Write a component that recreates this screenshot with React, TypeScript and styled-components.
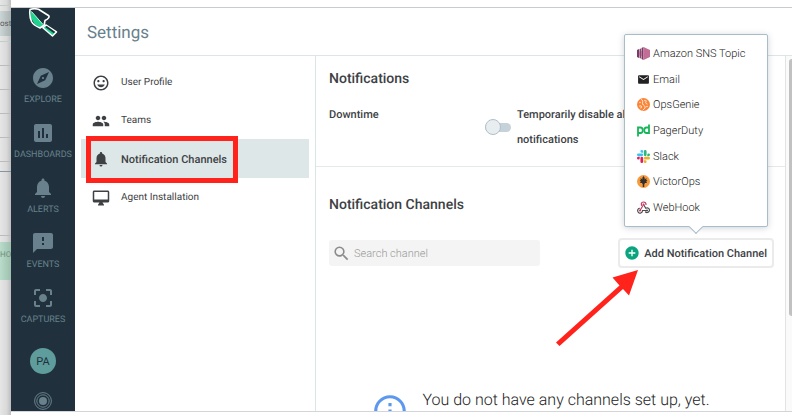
import React from "react";
import styled, { createGlobalStyle, css } from "styled-components";
import {
  MdAddCircle,
  MdCenterFocusStrong,
  MdEmail,
  MdExplore,
  MdFeedback,
  MdInfoOutline,
  MdInsertChart,
  MdInsertEmoticon,
  MdNotifications,
  MdOutlineDesktopMac,
  MdPeople,
  MdSearch,
} from "react-icons/md";

const GlobalStyle = createGlobalStyle`
  *, *::before, *::after { box-sizing: border-box; }
  body {
    margin: 0;
    background: #fff;
    font-family: Roboto, "Liberation Sans", sans-serif;
    color: #3d4144;
    text-rendering: geometricPrecision;
  }
  button, input { font: inherit; color: inherit; text-rendering: inherit; }
`;

const red = "#ff231c";

const Desktop = styled.div`
  display: grid;
  grid-template-columns: 11px minmax(0, 1fr);
  grid-template-rows: minmax(0, 1fr);
  height: 100vh;
  overflow: hidden;
`;

/* Sliver of the window that lies behind */
const BackWindow = styled.div`
  display: flex;
  flex-direction: column;
  overflow: hidden;
  background: linear-gradient(90deg, #e6e6e6, #d9d9d9 60%, #bdbdbd);
`;

const BackRow = styled.div<{ $h: number; $tone?: "tab" | "green"; $line?: string }>`
  flex: none;
  height: ${(p) => p.$h}px;
  display: flex;
  align-items: center;
  font-size: 8px;
  color: ${(p) => (p.$tone === "green" ? "#6f8f7d" : "#55595b")};
  border-bottom: 1px solid ${(p) => p.$line ?? "transparent"};
  ${(p) => p.$tone === "tab" && css`background: linear-gradient(90deg, #ccd6d6, #a9b1b1);`}
  ${(p) => p.$tone === "green" && css`background: linear-gradient(90deg, #b9dccb, #9dbfae);`}
`;

const Window = styled.div`
  display: grid;
  grid-template-rows: 8px minmax(0, 1fr) 4px;
  min-width: 0;
`;

const TitleStrip = styled.div`
  background: #fff;
  border-bottom: 1px solid #c9cccf;
`;

const BottomStrip = styled.div`
  background: #fff;
  border-top: 1px solid #d3d5db;
`;

const Viewport = styled.div`
  display: grid;
  grid-template-columns: 64px minmax(0, 1fr);
  grid-template-rows: minmax(0, 1fr);
  min-height: 0;
  overflow: hidden;
  background: #fff;
`;

const Sidebar = styled.nav`
  display: flex;
  flex-direction: column;
  align-items: center;
  min-height: 0;
  overflow: hidden;
  background: #20313d;
  color: #68818c;
`;

const Logo = styled.a`
  flex: none;
  height: 58px;
  svg { display: block; }
`;

const SideLink = styled.a`
  flex: none;
  display: flex;
  flex-direction: column;
  align-items: center;
  gap: 4px;
  height: 55px;
  color: inherit;
  text-decoration: none;
  font-size: 9px;
  line-height: 13px;
`;

const Avatar = styled.button`
  flex: none;
  width: 26px;
  height: 26px;
  margin: 7px 0 18px;
  padding: 0;
  border: 0;
  border-radius: 50%;
  background: #5f9c9c;
  color: #20313d;
  font-size: 11px;
`;

const Content = styled.div`
  display: grid;
  grid-template-rows: 48px minmax(0, 1fr);
  min-width: 0;
  min-height: 0;
`;

const Header = styled.header`
  display: flex;
  align-items: center;
  padding: 2px 0 0 12px;
  border-bottom: 1px solid #dbe6e8;
`;

const PageTitle = styled.h1`
  margin: 0;
  font-size: 17px;
  font-weight: 400;
  color: #68818c;
`;

const Columns = styled.div`
  display: grid;
  grid-template-columns: 240px minmax(0, 1fr) 7px;
  min-height: 0;
`;

const SettingsNav = styled.nav`
  display: flex;
  flex-direction: column;
  padding: 7px 6px;
`;

const SettingsLink = styled.a<{ $active?: boolean }>`
  position: relative;
  display: flex;
  align-items: center;
  gap: 11px;
  min-height: ${(p) => (p.$active ? 39 : 38)}px;
  padding: 1px 0 0 11px;
  background: ${(p) => (p.$active ? "#dee7e8" : "transparent")};
  color: #3d4144;
  font-size: ${(p) => (p.$active ? 11 : 10)}px;
  font-weight: ${(p) => (p.$active ? 500 : 400)};
  text-decoration: none;
`;

const Highlight = styled.span`
  position: absolute;
  left: 5px;
  top: -3px;
  width: 152px;
  height: 47px;
  border: 5px solid ${red};
  pointer-events: none;
`;

const Main = styled.main`
  min-width: 0;
  min-height: 0;
  border-left: 1px solid #d8e6e6;
`;

const Section = styled.section<{ $ruled?: boolean }>`
  padding: 13px 11px 14px 13px;
  ${(p) => p.$ruled && css`border-bottom: 1px solid #e6e9ea;`}
  & + & { padding-top: 28px; }
`;

const SectionTitle = styled.h2`
  margin: 0;
  font-size: 14px;
  line-height: 20px;
  font-weight: 500;
`;

const DowntimeRow = styled.div`
  display: grid;
  grid-template-columns: 156px 26px minmax(0, 132px);
  align-items: center;
  margin-top: 13px;
  font-size: 11px;
  line-height: 25px;
  font-weight: 500;
`;

const FieldName = styled.span`
  align-self: start;
`;

const Toggle = styled.input`
  appearance: none;
  display: flex;
  align-items: center;
  width: 26px;
  height: 9px;
  margin: 0;
  border-radius: 5px;
  background: #c6d2da;
  &::before {
    content: "";
    width: 16px;
    height: 16px;
    flex: none;
    border: 1px solid #afc0ca;
    border-radius: 50%;
    background: #e8edf0;
  }
  &:checked { justify-content: flex-end; }
`;

const ToggleLabel = styled.label`
  padding-left: 6px;
`;

const Tools = styled.div`
  display: flex;
  align-items: center;
  justify-content: space-between;
  margin-top: 23px;
`;

const SearchBox = styled.label`
  display: flex;
  align-items: center;
  gap: 3px;
  width: 211px;
  height: 26px;
  padding-left: 3px;
  border-radius: 3px;
  background: #f4f4f4;
  color: #8b8b8b;
`;

const SearchInput = styled.input`
  flex: 1;
  min-width: 0;
  padding: 0;
  border: 0;
  outline: 0;
  background: none;
  font-size: 11px;
  font-weight: 300;
  &::placeholder { color: #999; opacity: 1; }
`;

const AddAnchor = styled.div`
  position: relative;
`;

const AddButton = styled.button`
  display: flex;
  align-items: center;
  gap: 4px;
  height: 30px;
  padding: 0 5px 0 4px;
  border: 2px solid #ebebeb;
  border-radius: 4px;
  background: #fff;
  font-size: 11px;
  font-weight: 500;
  white-space: nowrap;
  svg { color: #0aa57f; }
`;

const Popover = styled.div`
  position: absolute;
  right: 6px;
  bottom: calc(100% + 11px);
  width: 144px;
  height: 193px;
  display: grid;
  grid-template-rows: repeat(7, 1fr);
  padding: 6px 0;
  border: 1px solid #a9bcc7;
  border-radius: 2px;
  background: #fff;
  box-shadow: 0 1px 6px rgba(60, 80, 95, 0.25);
  &::after {
    content: "";
    position: absolute;
    left: 66px;
    bottom: -6px;
    width: 10px;
    height: 10px;
    border: solid #a9bcc7;
    border-width: 0 1px 1px 0;
    background: #fff;
    transform: rotate(45deg);
  }
`;

const ChannelOption = styled.button`
  display: flex;
  align-items: center;
  gap: 3px;
  padding: 0 0 0 12px;
  border: 0;
  background: none;
  font-size: 11px;
  font-weight: 300;
  color: #222;
  text-align: left;
  svg { flex: none; }
`;

const Arrow = styled.svg`
  position: absolute;
  right: 132px;
  top: 30px;
  pointer-events: none;
`;

const Empty = styled.div`
  display: flex;
  align-items: flex-start;
  justify-content: center;
  gap: 13px;
  margin-top: 120px;
  padding-right: 22px;
  svg { flex: none; margin-top: 4px; color: #5b98ee; }
`;

const EmptyText = styled.p`
  margin: 0;
  font-size: 16px;
  font-weight: 300;
  color: #222;
  line-height: 24px;
`;

const ScrollTrack = styled.div`
  border-left: 1px solid #e3e3e3;
  background: #fafafa;
  padding: 3px 0 0 3px;
`;

const ScrollThumb = styled.div`
  height: 73%;
  border-radius: 4px 0 0 4px;
  background: #c1c1c1;
`;

const TrowelLogo = () => (
  <svg width="32" height="32" viewBox="0 0 32 32">
    <path d="M3.500 2.500 4 10 7.500 16 13 19.500 16.500 16.500Z" fill="#1ed290" />
    <path d="M4.500 3.500 15.500 16" stroke="#b9f2dc" strokeWidth="1" />
    <path
      d="M3 1.500C5 .8 9 .6 11.500 1.300L21.800 7.800C22.500 9 21.800 10.500 18 12.500L17.200 17 13 20C9.500 18.500 6 16.500 4.500 13.500 2.800 9.500 2.500 5 3 1.500Z"
      fill="none"
      stroke="#fff"
      strokeWidth="1.600"
      strokeLinejoin="round"
    />
    <path d="M15.800 19.800 18.800 17 29.500 24 25.500 28Z" fill="#1ed290" stroke="#fff" strokeWidth="1.500" strokeLinejoin="round" />
    <path d="M19 18.500 27.500 24.500" stroke="#20313d" strokeWidth="2" />
  </svg>
);

const Rings = () => (
  <svg width="18" height="18" viewBox="0 0 18 18" fill="none" stroke="currentColor">
    <circle cx="9" cy="9" r="8.400" />
    <circle cx="9" cy="9" r="6.200" />
    <circle cx="9" cy="9" r="4" fill="currentColor" stroke="none" />
  </svg>
);

const SnsIcon = () => (
  <svg width="13" height="13" viewBox="0 0 26 26">
    <path d="M0 6 4 4V22L0 20Z" fill="#7b3a63" />
    <path d="M5 4 8 3V23L5 22Z" fill="#8d4672" />
    <path d="M9 2 13 0V26L9 24Z" fill="#7b3a63" />
    <path d="M13 0 26 6V20L13 26Z" fill="#c26d96" />
    <path d="M4 9H5V17H4ZM8 8H9V18H8Z" fill="#a4588a" />
  </svg>
);

const OpsGenieIcon = () => (
  <svg width="13" height="13" viewBox="0 0 26 26">
    <circle cx="13" cy="13" r="13" fill="#fb8437" />
    <path d="M9 3C15 7 8 10 13 14S17 20 12 24M19 6C16 8 17 11 20 12M5 16C9 14 10 17 8 20" fill="none" stroke="#fff" strokeWidth="1.800" strokeLinecap="round" />
    <g fill="#fff">
      <circle cx="6" cy="9" r="1.300" />
      <circle cx="16" cy="5" r="1.300" />
      <circle cx="20" cy="17" r="1.400" />
    </g>
  </svg>
);

const PagerDutyIcon = () => (
  <svg width="13" height="13" viewBox="0 0 26 26" fill="none" stroke="#19b55b" strokeWidth="3.600">
    <path d="M2 25V7H7C13 7 13 18 7 18H2" />
    <path d="M24 1V18H19C13 18 13 7 19 7H24" />
  </svg>
);

const SlackIcon = () => (
  <svg width="13" height="13" viewBox="0 0 24 24">
    <path fill="#e01e5a" d="M5.042 15.165a2.528 2.528 0 0 1-2.520 2.523A2.528 2.528 0 0 1 0 15.165a2.527 2.527 0 0 1 2.522-2.520h2.520v2.520zM6.313 15.165a2.527 2.527 0 0 1 2.521-2.520 2.527 2.527 0 0 1 2.521 2.520v6.313A2.528 2.528 0 0 1 8.834 24a2.528 2.528 0 0 1-2.521-2.522v-6.313z" />
    <path fill="#36c5f0" d="M8.834 5.042a2.528 2.528 0 0 1-2.521-2.520A2.528 2.528 0 0 1 8.834 0a2.528 2.528 0 0 1 2.521 2.522v2.520H8.834zM8.834 6.313a2.528 2.528 0 0 1 2.521 2.521 2.528 2.528 0 0 1-2.521 2.521H2.522A2.528 2.528 0 0 1 0 8.834a2.528 2.528 0 0 1 2.522-2.521h6.312z" />
    <path fill="#2eb67d" d="M18.956 8.834a2.528 2.528 0 0 1 2.522-2.521A2.528 2.528 0 0 1 24 8.834a2.528 2.528 0 0 1-2.522 2.521h-2.522V8.834zM17.688 8.834a2.528 2.528 0 0 1-2.523 2.521 2.527 2.527 0 0 1-2.520-2.521V2.522A2.527 2.527 0 0 1 15.165 0a2.528 2.528 0 0 1 2.523 2.522v6.312z" />
    <path fill="#ecb22e" d="M15.165 18.956a2.528 2.528 0 0 1 2.523 2.522A2.528 2.528 0 0 1 15.165 24a2.527 2.527 0 0 1-2.520-2.522v-2.522h2.520zM15.165 17.688a2.527 2.527 0 0 1-2.520-2.523 2.526 2.526 0 0 1 2.520-2.520h6.313A2.527 2.527 0 0 1 24 15.165a2.528 2.528 0 0 1-2.522 2.523h-6.313z" />
  </svg>
);

const VictorOpsIcon = () => (
  <svg width="13" height="13" viewBox="0 0 26 26">
    <circle cx="13" cy="13" r="13" fill="#f79a3b" />
    <path d="M13 2 15.500 6 15 9 19 6 18.500 10 21 11 18.500 13 20 16 16 16 14.500 19V24H11.500V19L10 16 6 16 7.500 13 5 11 7.500 10 7 6 11 9 10.500 6Z" fill="#33302e" />
  </svg>
);

const WebHookIcon = () => (
  <svg width="13" height="13" viewBox="0 0 26 26" fill="none" strokeWidth="2.400" strokeLinecap="round">
    <path d="M6 19 11 10.500C7 8 8 2 13 2 16 2 18 4 18 7" stroke="#c73a63" />
    <path d="M13 7 17.500 14.500C22 12 26 16 24.500 20 23 23.500 19 24 17 22" stroke="#4b4b4b" />
    <path d="M20 19H11C11 24 5 26 2.500 22.500 0 19 2 15 5 14.500" stroke="#4b4b4b" />
    <circle cx="13" cy="7" r="2" fill="#c73a63" stroke="none" />
    <circle cx="6" cy="19" r="2" fill="#c73a63" stroke="none" />
    <circle cx="20" cy="19" r="2" fill="#4b4b4b" stroke="none" />
  </svg>
);

const backRows: { h: number; tone?: "tab" | "green"; line?: string; text?: string }[] = [
  { h: 6, line: "#bccfc9" },
  { h: 5 },
  { h: 25, tone: "tab", text: "ost" },
  { h: 6, line: "#bccfc9" },
  { h: 24, line: "#bbbbbb" },
  { h: 24, line: "#bbbbbb" },
  { h: 24, line: "#bbbbbb" },
  { h: 24, line: "#bbbbbb" },
  { h: 24, line: "#bbbbbb" },
  { h: 10, line: "#8494a5" },
  { h: 64, line: "#bbbbbb" },
  { h: 6 },
  { h: 26, tone: "green", text: "HO" },
  { h: 12, tone: "green" },
];

const sideItems = [
  { label: "EXPLORE", Icon: MdExplore },
  { label: "DASHBOARDS", Icon: MdInsertChart },
  { label: "ALERTS", Icon: MdNotifications },
  { label: "EVENTS", Icon: MdFeedback },
  { label: "CAPTURES", Icon: MdCenterFocusStrong },
];

const settingsItems = [
  { label: "User Profile", Icon: MdInsertEmoticon },
  { label: "Teams", Icon: MdPeople },
  { label: "Notification Channels", Icon: MdNotifications, active: true },
  { label: "Agent Installation", Icon: MdOutlineDesktopMac },
];

const channels = [
  { name: "Amazon SNS Topic", icon: <SnsIcon /> },
  { name: "Email", icon: <MdEmail size={13} color="#222" /> },
  { name: "OpsGenie", icon: <OpsGenieIcon /> },
  { name: "PagerDuty", icon: <PagerDutyIcon /> },
  { name: "Slack", icon: <SlackIcon /> },
  { name: "VictorOps", icon: <VictorOpsIcon /> },
  { name: "WebHook", icon: <WebHookIcon /> },
];

export default function App() {
  return (
    <Desktop>
      <GlobalStyle />
      <BackWindow>
        {backRows.map((r, i) => (
          <BackRow key={i} $h={r.h} $tone={r.tone} $line={r.line}>
            {r.text}
          </BackRow>
        ))}
      </BackWindow>
      <Window>
        <TitleStrip />
        <Viewport>
          <Sidebar aria-label="Primary">
            <Logo href="#home" aria-label="Home">
              <TrowelLogo />
            </Logo>
            {sideItems.map(({ label, Icon }) => (
              <SideLink key={label} href={`#${label.toLowerCase()}`}>
                <Icon size={24} />
                {label}
              </SideLink>
            ))}
            <Avatar type="button">PA</Avatar>
            <SideLink href="#status" aria-label="Status">
              <Rings />
            </SideLink>
          </Sidebar>
          <Content>
            <Header>
              <PageTitle>Settings</PageTitle>
            </Header>
            <Columns>
              <SettingsNav aria-label="Settings">
                {settingsItems.map(({ label, Icon, active }) => (
                  <SettingsLink
                    key={label}
                    href={`#${label.toLowerCase().replace(" ", "-")}`}
                    $active={active}
                    aria-current={active ? "page" : undefined}
                  >
                    <Icon size={18} />
                    {label}
                    {active && <Highlight />}
                  </SettingsLink>
                ))}
              </SettingsNav>
              <Main>
                <Section $ruled>
                  <SectionTitle>Notifications</SectionTitle>
                  <DowntimeRow>
                    <FieldName>Downtime</FieldName>
                    <Toggle type="checkbox" id="downtime" />
                    <ToggleLabel htmlFor="downtime">Temporarily disable alert notifications</ToggleLabel>
                  </DowntimeRow>
                </Section>
                <Section>
                  <SectionTitle>Notification Channels</SectionTitle>
                  <Tools>
                    <SearchBox>
                      <MdSearch size={19} />
                      <SearchInput type="text" placeholder="Search channel" aria-label="Search channel" />
                    </SearchBox>
                    <AddAnchor>
                      <AddButton type="button" aria-expanded="true">
                        <MdAddCircle size={16} />
                        Add Notification Channel
                      </AddButton>
                      <Popover>
                        {channels.map((c) => (
                          <ChannelOption key={c.name} type="button">
                            {c.icon}
                            {c.name}
                          </ChannelOption>
                        ))}
                      </Popover>
                      <Arrow width="88" height="80" viewBox="0 0 88 80" fill={red}>
                        <path d="M84 2 75 27.500 69 21 5.500 78 2 74.500 65.500 17.500 58.500 9.500Z" />
                      </Arrow>
                    </AddAnchor>
                  </Tools>
                  <Empty>
                    <MdInfoOutline size={38} />
                    <EmptyText>You do not have any channels set up, yet.</EmptyText>
                  </Empty>
                </Section>
              </Main>
              <ScrollTrack>
                <ScrollThumb />
              </ScrollTrack>
            </Columns>
          </Content>
        </Viewport>
        <BottomStrip />
      </Window>
    </Desktop>
  );
}
